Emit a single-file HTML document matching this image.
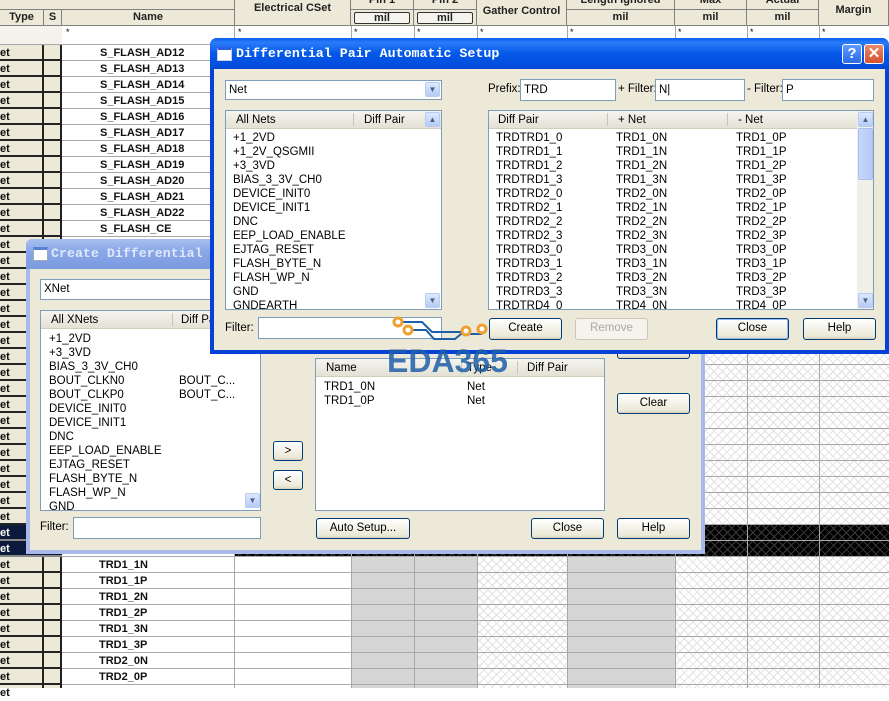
<!DOCTYPE html>
<html><head><meta charset="utf-8"><style>
*{margin:0;padding:0;box-sizing:border-box}
body{width:889px;height:688px;overflow:hidden;position:relative;background:#fff;font-family:"Liberation Sans",sans-serif}
.a{position:absolute}
.hd{background:#ece9d8;border-right:1px solid #808080;border-bottom:1px solid #808080;font:bold 11px "Liberation Sans",sans-serif;color:#222;text-align:center}
.hatch{background-color:#fff;background-image:repeating-linear-gradient(45deg,transparent 0 5px,#e2e2e2 5px 6px),repeating-linear-gradient(-45deg,transparent 0 5px,#e2e2e2 5px 6px)}
.dk{background-color:#000;background-image:repeating-linear-gradient(45deg,transparent 0 5px,#3a3a3a 5px 6px),repeating-linear-gradient(-45deg,transparent 0 5px,#3a3a3a 5px 6px)}
.vl{position:absolute;width:1px;background:#a8a8a8}
.rows{background-image:repeating-linear-gradient(to bottom,transparent 0 15px,#a8a8a8 15px 16px)}
.et{font:bold 11px/16px "Liberation Sans",sans-serif;color:#111}
.nm{font:bold 11px/16px "Liberation Sans",sans-serif;color:#111}
.dlg{position:absolute;background:#ece9d8;font:11.5px "Liberation Sans",sans-serif;color:#000}
.tt{font:bold 13.3px "Liberation Mono",monospace;position:absolute;letter-spacing:0}
.in{position:absolute;background:#fff;border:1px solid #7f9db9;line-height:18px;padding:0 3px}
.lst{position:absolute;background:#fff;border:1px solid #7f9db9;overflow:hidden}
.lh{position:absolute;left:0;right:0;top:0;height:18px;background:linear-gradient(#f5f4ee,#e4e1d4);border-bottom:1px solid #d0cdbf}
.btn{position:absolute;border:1px solid #003c74;border-radius:3px;background:linear-gradient(#fff,#ece9d8 85%,#d6d0c0);text-align:center;font:11.5px "Liberation Sans",sans-serif;line-height:19px}
.dis{border-color:#c9c7ba;color:#aca899;background:#f4f3ee}
.sb{position:absolute;background:#f0efe8;border-left:1px solid #eee}
.arr{position:absolute;width:15px;height:15px;background:linear-gradient(#dce8fd,#b5ccf7);border:1px solid #b8cbf2;border-radius:2px;color:#4d6185;font-size:8px;text-align:center;line-height:13px}
.it{position:absolute;line-height:14px;white-space:pre;font-size:11.5px}
</style></head><body>

<div class="a hd" style="left:0;top:-10px;width:235px;height:20px"></div>
<div class="a hd" style="left:0;top:10px;width:44px;height:16px;line-height:15px">Type</div>
<div class="a hd" style="left:44px;top:10px;width:18px;height:16px;line-height:15px">S</div>
<div class="a hd" style="left:62px;top:10px;width:173px;height:16px;line-height:15px">Name</div>
<div class="a hd" style="left:235px;top:-2px;width:116px;height:28px;line-height:20px">Electrical CSet</div>
<div class="a hd" style="left:351px;top:-8px;width:63px;height:18px;line-height:16px">Pin 1</div>
<div class="a hd" style="left:414px;top:-8px;width:63px;height:18px;line-height:16px">Pin 2</div>
<div class="a hd" style="left:351px;top:10px;width:63px;height:16px"><div style="margin:2px 3px;border:1px solid #333;border-radius:2px;height:12px;line-height:11px;background:#f4f3ee">mil</div></div>
<div class="a hd" style="left:414px;top:10px;width:63px;height:16px"><div style="margin:2px 3px;border:1px solid #333;border-radius:2px;height:12px;line-height:11px;background:#f4f3ee">mil</div></div>
<div class="a hd" style="left:477px;top:-2px;width:90px;height:28px;line-height:26px">Gather Control</div>
<div class="a hd" style="left:567px;top:-8px;width:108px;height:18px;line-height:16px">Length ignored</div>
<div class="a hd" style="left:567px;top:10px;width:108px;height:16px;line-height:15px">mil</div>
<div class="a hd" style="left:675px;top:-8px;width:72px;height:18px;line-height:16px">Max</div>
<div class="a hd" style="left:675px;top:10px;width:72px;height:16px;line-height:15px">mil</div>
<div class="a hd" style="left:747px;top:-8px;width:72px;height:18px;line-height:16px">Actual</div>
<div class="a hd" style="left:747px;top:10px;width:72px;height:16px;line-height:15px">mil</div>
<div class="a hd" style="left:819px;top:-2px;width:70px;height:28px;line-height:24px">Margin</div>
<div class="a" style="left:0;top:26px;width:62px;height:19px;background:#f3f2ec;border-bottom:1px solid #a8a8a8"></div>
<div class="a" style="left:62px;top:26px;width:827px;height:19px;background:#fff;border-bottom:1px solid #a8a8a8"></div>
<div class="a" style="top:27px;left:66px;font-size:9px">*</div>
<div class="a" style="top:27px;left:238px;font-size:9px">*</div>
<div class="a" style="top:27px;left:354px;font-size:9px">*</div>
<div class="a" style="top:27px;left:417px;font-size:9px">*</div>
<div class="a" style="top:27px;left:480px;font-size:9px">*</div>
<div class="a" style="top:27px;left:570px;font-size:9px">*</div>
<div class="a" style="top:27px;left:678px;font-size:9px">*</div>
<div class="a" style="top:27px;left:750px;font-size:9px">*</div>
<div class="a" style="top:27px;left:822px;font-size:9px">*</div>

<div class="a" style="left:62px;top:45px;width:289px;height:643px;background:#fff"></div>
<div class="a" style="left:351px;top:45px;width:126px;height:643px;background:#d6d6d6"></div>
<div class="a hatch" style="left:477px;top:45px;width:90px;height:643px"></div>
<div class="a" style="left:567px;top:45px;width:108px;height:643px;background:#d6d6d6"></div>
<div class="a hatch" style="left:675px;top:45px;width:214px;height:643px"></div>
<div class="a dk" style="left:235px;top:525px;width:654px;height:32px"></div>
<div class="a rows" style="left:62px;top:45px;width:827px;height:643px"></div>
<div class="vl" style="left:234px;top:26px;height:662px"></div>
<div class="vl" style="left:351px;top:26px;height:662px"></div>
<div class="vl" style="left:414px;top:26px;height:662px"></div>
<div class="vl" style="left:477px;top:26px;height:662px"></div>
<div class="vl" style="left:567px;top:26px;height:662px"></div>
<div class="vl" style="left:675px;top:26px;height:662px"></div>
<div class="vl" style="left:747px;top:26px;height:662px"></div>
<div class="vl" style="left:819px;top:26px;height:662px"></div>
<div class="a" style="left:0;top:45px;width:62px;height:643px;background:#ece9d8;background-image:repeating-linear-gradient(to bottom,transparent 0 14px,#222 14px 16px)"></div>
<div class="a" style="left:42px;top:45px;width:2px;height:643px;background:#222"></div>
<div class="a" style="left:60px;top:45px;width:2px;height:643px;background:#222"></div>
<div class="a" style="left:0;top:525px;width:62px;height:32px;background:#0b1a3a;background-image:repeating-linear-gradient(to bottom,transparent 0 14px,#888 14px 16px)"></div>
<div class="a et" style="left:0;top:45px">et<br>et<br>et<br>et<br>et<br>et<br>et<br>et<br>et<br>et<br>et<br>et<br>et<br>et<br>et<br>et<br>et<br>et<br>et<br>et<br>et<br>et<br>et<br>et<br>et<br>et<br>et<br>et<br>et<br>et<br><span style="color:#fff">et<br>et</span><br>et<br>et<br>et<br>et<br>et<br>et<br>et<br>et<br>et</div>
<div class="a nm" style="left:100px;top:45px">S_FLASH_AD12<br>S_FLASH_AD13<br>S_FLASH_AD14<br>S_FLASH_AD15<br>S_FLASH_AD16<br>S_FLASH_AD17<br>S_FLASH_AD18<br>S_FLASH_AD19<br>S_FLASH_AD20<br>S_FLASH_AD21<br>S_FLASH_AD22<br>S_FLASH_CE</div>
<div class="a nm" style="left:99px;top:557px">TRD1_1N<br>TRD1_1P<br>TRD1_2N<br>TRD1_2P<br>TRD1_3N<br>TRD1_3P<br>TRD2_0N<br>TRD2_0P</div>

<div class="dlg" style="left:26px;top:239px;width:679px;height:315px;border:4px solid #a9b9ea;border-top:none;border-radius:6px 6px 0 0">
 <div class="a" style="left:-4px;top:0;width:679px;height:30px;border-radius:6px 6px 0 0;background:linear-gradient(#a8c0f0,#8aa8e8 40%,#7b9ae0)"></div>
 <div class="a" style="left:3px;top:8px;width:15px;height:14px;background:#fff;border:1px solid #9ab;border-top:3px solid #5a7fd8"></div>
 <div class="tt" style="left:21px;top:7px;color:#dfe8fa">Create Differential</div>
 <div class="in" style="left:10px;top:40px;width:300px;height:21px">XNet</div>
 <div class="lst" style="left:10px;top:71px;width:221px;height:201px">
  <div class="lh"><span class="a" style="left:10px;top:3px">All XNets</span><span class="a" style="left:140px;top:3px">Diff Pair</span><span class="a" style="left:131px;top:2px;width:1px;height:13px;background:#c8c5b8"></span></div>
  <div class="it" style="left:8px;top:21px">+1_2VD
+3_3VD
BIAS_3_3V_CH0
BOUT_CLKN0
BOUT_CLKP0
DEVICE_INIT0
DEVICE_INIT1
DNC
EEP_LOAD_ENABLE
EJTAG_RESET
FLASH_BYTE_N
FLASH_WP_N
GND</div>
  <div class="it" style="left:138px;top:63px">BOUT_C...
BOUT_C...</div>
  <div class="arr" style="left:204px;top:182px">&#9660;</div>
 </div>
 <div class="a" style="left:10px;top:282px">Filter:</div>
 <div class="in" style="left:43px;top:278px;width:188px;height:22px"></div>
 <div class="btn" style="left:243px;top:202px;width:30px;height:20px">&gt;</div>
 <div class="btn" style="left:243px;top:231px;width:30px;height:20px">&lt;</div>
 <div class="lst" style="left:285px;top:119px;width:290px;height:153px">
  <div class="lh"><span class="a" style="left:10px;top:3px">Name</span><span class="a" style="left:151px;top:3px">Type</span><span class="a" style="left:211px;top:3px">Diff Pair</span><span class="a" style="left:145px;top:2px;width:1px;height:13px;background:#c8c5b8"></span><span class="a" style="left:201px;top:2px;width:1px;height:13px;background:#c8c5b8"></span></div>
  <div class="it" style="left:8px;top:21px">TRD1_0N
TRD1_0P</div>
  <div class="it" style="left:151px;top:21px">Net
Net</div>
 </div>
 <div class="btn" style="left:587px;top:99px;width:73px;height:21px"></div>
 <div class="btn" style="left:587px;top:154px;width:73px;height:21px">Clear</div>
 <div class="btn" style="left:286px;top:279px;width:94px;height:21px">Auto Setup...</div>
 <div class="btn" style="left:501px;top:279px;width:73px;height:21px">Close</div>
 <div class="btn" style="left:587px;top:279px;width:73px;height:21px">Help</div>
</div>

<div class="dlg" style="left:210px;top:38px;width:679px;height:316px;border:4px solid #0841d8;border-top:none;border-radius:7px 7px 0 0">
 <div class="a" style="left:-4px;top:0;width:679px;height:31px;border-radius:7px 7px 0 0;background:linear-gradient(#0a5ef0,#2b7bf8 15%,#0458e8 50%,#0350e0 85%,#0346d0)"></div>
 <div class="a" style="left:3px;top:9px;width:15px;height:14px;background:#fff;border:1px solid #ccd;border-top:3px solid #2a5fe0"></div>
 <div class="tt" style="left:22px;top:8px;color:#fff">Differential Pair Automatic Setup</div>
 <div class="a" style="left:628px;top:6px;width:20px;height:20px;border:1px solid #fff;border-radius:3px;background:linear-gradient(#5d9bff,#2a6ae8);color:#fff;font:bold 15px/18px 'Liberation Sans';text-align:center">?</div>
 <div class="a" style="left:650px;top:6px;width:20px;height:20px;border:1px solid #fff;border-radius:3px;background:linear-gradient(#ea8a6a,#d4512e);color:#fff;font:bold 15px/18px 'Liberation Sans';text-align:center">&#10005;</div>
 <div class="in" style="left:11px;top:42px;width:217px;height:20px">Net<div class="arr" style="right:1px;top:1px">&#9660;</div></div>
 <div class="lst" style="left:11px;top:72px;width:217px;height:200px">
  <div class="lh"><span class="a" style="left:10px;top:3px">All Nets</span><span class="a" style="left:138px;top:3px">Diff Pair</span><span class="a" style="left:127px;top:2px;width:1px;height:13px;background:#c8c5b8"></span></div>
  <div class="it" style="left:7px;top:20px">+1_2VD
+1_2V_QSGMII
+3_3VD
BIAS_3_3V_CH0
DEVICE_INIT0
DEVICE_INIT1
DNC
EEP_LOAD_ENABLE
EJTAG_RESET
FLASH_BYTE_N
FLASH_WP_N
GND
GNDEARTH</div>
  <div class="arr" style="left:199px;top:1px">&#9650;</div>
  <div class="arr" style="left:199px;top:182px">&#9660;</div>
 </div>
 <div class="a" style="left:11px;top:284px">Filter:</div>
 <div class="in" style="left:44px;top:279px;width:184px;height:22px"></div>
 <div class="a" style="left:274px;top:45px">Prefix:</div>
 <div class="in" style="left:306px;top:41px;width:96px;height:22px;line-height:20px">TRD</div>
 <div class="a" style="left:404px;top:45px">+ Filter:</div>
 <div class="in" style="left:441px;top:41px;width:90px;height:22px;line-height:20px">N|</div>
 <div class="a" style="left:533px;top:45px">- Filter:</div>
 <div class="in" style="left:568px;top:41px;width:92px;height:22px;line-height:20px">P</div>
 <div class="lst" style="left:274px;top:72px;width:386px;height:200px">
  <div class="lh"><span class="a" style="left:9px;top:3px">Diff Pair</span><span class="a" style="left:129px;top:3px">+ Net</span><span class="a" style="left:249px;top:3px">- Net</span><span class="a" style="left:118px;top:2px;width:1px;height:13px;background:#c8c5b8"></span><span class="a" style="left:238px;top:2px;width:1px;height:13px;background:#c8c5b8"></span></div>
  <div class="it" style="left:7px;top:20px">TRDTRD1_0
TRDTRD1_1
TRDTRD1_2
TRDTRD1_3
TRDTRD2_0
TRDTRD2_1
TRDTRD2_2
TRDTRD2_3
TRDTRD3_0
TRDTRD3_1
TRDTRD3_2
TRDTRD3_3
TRDTRD4_0</div>
  <div class="it" style="left:127px;top:20px">TRD1_0N
TRD1_1N
TRD1_2N
TRD1_3N
TRD2_0N
TRD2_1N
TRD2_2N
TRD2_3N
TRD3_0N
TRD3_1N
TRD3_2N
TRD3_3N
TRD4_0N</div>
  <div class="it" style="left:247px;top:20px">TRD1_0P
TRD1_1P
TRD1_2P
TRD1_3P
TRD2_0P
TRD2_1P
TRD2_2P
TRD2_3P
TRD3_0P
TRD3_1P
TRD3_2P
TRD3_3P
TRD4_0P</div>
  <div class="sb" style="left:368px;top:0;width:17px;height:198px"></div>
  <div class="arr" style="left:369px;top:1px">&#9650;</div>
  <div class="a" style="left:369px;top:17px;width:15px;height:52px;background:linear-gradient(90deg,#c9d8fb,#b4c9f5);border:1px solid #a9bff0;border-radius:2px"></div>
  <div class="arr" style="left:369px;top:182px">&#9660;</div>
 </div>
 <div class="btn" style="left:275px;top:280px;width:73px;height:22px">Create</div>
 <div class="btn dis" style="left:361px;top:280px;width:73px;height:22px">Remove</div>
 <div class="btn" style="left:502px;top:280px;width:73px;height:22px;box-shadow:inset 0 0 0 1px #99b8f0">Close</div>
 <div class="btn" style="left:589px;top:280px;width:73px;height:22px">Help</div>
</div>

<svg class="a" style="left:380px;top:310px" width="130" height="70" viewBox="0 0 130 70">
 <path d="M18 12 H42 L52 22 H84" stroke="#1d5fa8" stroke-width="2" fill="none"/>
 <path d="M28 20 H46 L54 29 H75 L81 24 H102" stroke="#1d5fa8" stroke-width="2" fill="none"/>
 <circle cx="18" cy="12" r="4" fill="#fff" stroke="#f0a030" stroke-width="3"/>
 <circle cx="28" cy="20" r="4" fill="#fff" stroke="#f0a030" stroke-width="3"/>
 <circle cx="86" cy="21" r="4" fill="#fff" stroke="#f0a030" stroke-width="3"/>
 <circle cx="102" cy="19" r="4" fill="#fff" stroke="#f0a030" stroke-width="3"/>
 <text x="7" y="62" font-family="Liberation Sans" font-size="32" font-weight="bold" fill="#1d5fa8" fill-opacity="0.85">EDA365</text>
</svg>
</body></html>
